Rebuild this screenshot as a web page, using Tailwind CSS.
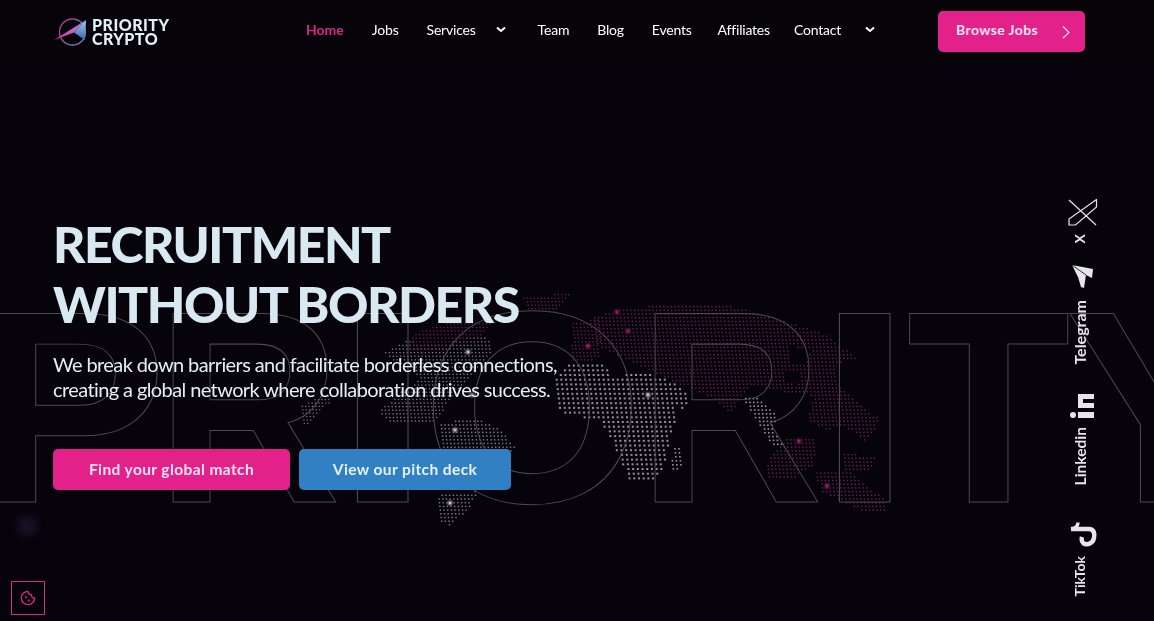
<!DOCTYPE html>
<html lang="en">

<head>
    <meta charset="UTF-8">
    <meta name="viewport" content="width=device-width, initial-scale=1.0">
    <script src="https://cdn.jsdelivr.net/npm/@tailwindcss/browser@4"></script>
    <title>Priority Crypto</title>
</head>

<body class="bg-[#06030b] h-[621px] overflow-hidden font-['Lato',sans-serif] text-[#e6f0f6]">
    <!-- Background map and outlined wordmark -->
    <div class="absolute inset-0 w-[1154px] h-[621px] overflow-hidden">
        <canvas id="worldMap" width="1154" height="621" class="absolute inset-0"></canvas>
        <svg class="absolute inset-0" width="1154" height="621" viewBox="0 0 1154 621" fill="none" stroke="#4b4a50" stroke-width="1">
            <g font-family="Liberation Sans" font-weight="700" font-size="274">
                <text transform="translate(-25 502) scale(1.05 1)" vector-effect="non-scaling-stroke">P</text>
                <text transform="translate(156 502) scale(0.935 1)" vector-effect="non-scaling-stroke">R</text>
                <text transform="translate(334 502) scale(1.28 1)" vector-effect="non-scaling-stroke">I</text>
                <text transform="translate(421.6 502) scale(1.04 1)" vector-effect="non-scaling-stroke">O</text>
                <text transform="translate(638 502) scale(0.935 1)" vector-effect="non-scaling-stroke">R</text>
                <text transform="translate(816 502) scale(1.28 1)" vector-effect="non-scaling-stroke">I</text>
                <text transform="translate(906.6 502) scale(0.98 1)" vector-effect="non-scaling-stroke">T</text>
                <text transform="translate(1065 502) scale(1.05 1)" vector-effect="non-scaling-stroke">Y</text>
            </g>
        </svg>
        <div class="absolute left-[17px] top-[516px] w-5 h-5 rounded-full bg-[#2a2347]/50 blur-[4px]"></div>
    </div>

    <!-- Header -->
    <header class="relative h-[63px] bg-[#060409] flex items-center pl-[53px] pr-[69px]">
        <div class="w-[253px] flex items-center">
            <svg class="-ml-[1px]" width="38" height="30" viewBox="0 0 38 30" fill="none">
                <defs>
                    <linearGradient id="ringStroke" x1="0" y1="0" x2="1" y2="1">
                        <stop offset="0" stop-color="#b0337f" />
                        <stop offset="1" stop-color="#5f8fc0" />
                    </linearGradient>
                    <linearGradient id="tailFill" x1="0" y1="1" x2="1" y2="0">
                        <stop offset="0" stop-color="#e0309a" />
                        <stop offset="1" stop-color="#a98fd8" />
                    </linearGradient>
                    <linearGradient id="wingFill" x1="0.5" y1="0" x2="0.5" y2="1">
                        <stop offset="0" stop-color="#8fd6f0" />
                        <stop offset="1" stop-color="#4a5fa8" />
                    </linearGradient>
                </defs>
                <circle cx="20.5" cy="15" r="13" stroke="url(#ringStroke)" stroke-width="1.3" />
                <path d="M2 23 L34 3 L22 15.5 Z" fill="url(#tailFill)" />
                <path d="M34 3 L33 23 L22 15.5 Z" fill="url(#wingFill)" />
            </svg>
            <div class="ml-[2px] font-black text-[16px] leading-[14px] tracking-[0.03em] text-[#e4eff6]">
                <div>PRIORITY</div>
                <div>CRYPTO</div>
            </div>
        </div>
        <nav class="-mt-[5px] flex items-center text-[14px] text-white gap-[28px] tracking-[-0.2px]">
            <a class="font-bold text-[#d6288a] tracking-normal">Home</a>
            <a>Jobs</a>
            <a class="flex items-center">Services
                <svg class="ml-[19px]" width="12" height="12" viewBox="0 0 12 12" fill="none" stroke="#fff" stroke-width="2"><path d="M2 4.5 L6 8 L10 4.5" /></svg>
            </a>
            <a class="ml-[3px]">Team</a>
            <a>Blog</a>
            <a>Events</a>
            <a class="-ml-[2px]">Affiliates</a>
            <a class="-ml-[4px] flex items-center">Contact
                <svg class="ml-[23px]" width="12" height="12" viewBox="0 0 12 12" fill="none" stroke="#fff" stroke-width="2"><path d="M2 4.5 L6 8 L10 4.5" /></svg>
            </a>
        </nav>
        <a class="ml-auto w-[147px] h-[41px] bg-[#e3218a] rounded-[5px] flex items-center justify-between pl-[18px] pr-[14px] text-[14px] font-bold tracking-[0.4px] text-[#fbe3f1]">
            <span class="-mt-[5px]">Browse Jobs</span>
            <svg width="10" height="14" viewBox="0 0 10 14" fill="none" stroke="#fbe3f1" stroke-width="1.2"><path d="M2 1.5 L8 7.5 L2 13" /></svg>
        </a>
    </header>

    <!-- Hero -->
    <main class="relative pl-[53px] pt-[151px]">
        <h1 class="font-black text-[50px] leading-[60px] tracking-[-0.03em] text-[#d9e9f2]">RECRUITMENT<br>WITHOUT BORDERS</h1>
        <p class="mt-[18px] text-[20px] leading-[25px] tracking-[-0.6px] text-[#e3eef5]">We break down barriers and facilitate borderless connections,<br>creating a global network where collaboration drives success.</p>
        <div class="mt-[47px] flex gap-[9px] text-[15.5px] font-bold tracking-[0.4px]">
            <a class="w-[237px] h-[41px] rounded-[5px] bg-[#e3218a] text-[#fbe3f1] flex items-center justify-center">Find your global match</a>
            <a class="w-[212px] h-[41px] rounded-[5px] bg-[#3180c4] text-[#e6f0f6] flex items-center justify-center">View our pitch deck</a>
        </div>
    </main>

    <!-- Social links -->
    <aside class="absolute left-[1068px] top-[199px] w-[30px] flex flex-col items-center text-[14px] font-bold text-[#e6e6ea]">
        <svg width="30" height="28" viewBox="0 0 30 28" fill="none" stroke="#e6e6ea" stroke-width="1.2">
            <path d="M28.5 0.5 V8 L7.5 26 H1 V20 Z" />
            <path d="M1 1 L28 26" />
        </svg>
        <span class="mt-[7px] mr-[6px] [writing-mode:vertical-rl] rotate-180 leading-[16px]">X</span>
        <svg class="mt-[21px]" width="30" height="25" viewBox="0 0 30 25" fill="#e6e6ea">
            <path d="M4 1 L25 5 L24 14 L18 11 L16 24 L13 23 L10 13 Z" />
            <path d="M4 1 L18 11" stroke="#05030a" stroke-width="0.8" />
        </svg>
        <span class="mt-[11px] mr-[6px] text-[16px] [writing-mode:vertical-rl] rotate-180 leading-[16px]">Telegram</span>
        <svg class="mt-[29px]" width="30" height="26" viewBox="0 0 30 26" fill="#e6e6ea">
            <path d="M10 0 H26 V5 H15 V9 H26 V14 H10 Z" />
            <rect x="10" y="18" width="16" height="6" />
            <circle cx="5" cy="21" r="3" />
        </svg>
        <span class="mt-[7px] mr-[6px] text-[15.5px] [writing-mode:vertical-rl] rotate-180 leading-[16px]">Linkedin</span>
        <svg class="mt-[36px]" width="30" height="27" viewBox="0 0 30 27" fill="none" stroke="#e6e6ea" stroke-width="4.5">
            <path d="M3 8 H21 C26 8 27 13 26 17 C25 22 20 24 17 23 C14 22 13 19 14 16" />
            <path d="M10 1.5 C10 5 7 7.5 3 8" stroke-width="3.5" />
        </svg>
        <span class="mt-[8px] mr-[6px] [writing-mode:vertical-rl] rotate-180 leading-[16px]">TikTok</span>
    </aside>

    <!-- Cookie settings -->
    <button class="absolute left-[11px] top-[581px] w-[34px] h-[34px] border border-[#d6288a] flex items-center justify-center">
        <svg width="16" height="16" viewBox="0 0 24 24" fill="none" stroke="#d6288a" stroke-width="2">
            <path d="M12 2 A10 10 0 1 0 22 12 A5 5 0 0 1 17 7 A5 5 0 0 1 12 2 Z" />
            <circle cx="9" cy="11" r="0.6" />
            <circle cx="13" cy="16" r="0.6" />
        </svg>
    </button>

    <script>
        // Dot clusters of the tilted world map: colour, spacing, dot size, outline
        const grey = "#939398";
        const dimGrey = "#828286";
        const pink = "#6c2257";
        const clusters = [
            { color: grey, step: 4.7, size: 2, poly: [[570,362],[600,362],[612,375],[645,372],[670,380],[688,395],[685,408],[672,405],[675,420],[668,440],[662,470],[650,482],[630,482],[618,455],[600,420],[560,412],[553,395],[555,375]] },
            { color: grey, step: 4, size: 1.6, poly: [[671,448],[681,448],[680,470],[672,470]] },
            { color: grey, step: 3.8, size: 1.6, poly: [[740,395],[755,396],[778,415],[772,425],[782,445],[772,445],[755,420]] },
            { color: dimGrey, step: 3.6, size: 1.3, poly: [[385,352],[405,340],[440,345],[468,336],[490,338],[492,352],[480,362],[470,378],[455,392],[433,423],[393,423],[378,412],[395,395],[420,378],[408,365],[395,362]] },
            { color: dimGrey, step: 3.4, size: 1.2, poly: [[300,405],[325,392],[332,400],[318,412],[302,428]] },
            { color: dimGrey, step: 3.7, size: 1.4, poly: [[440,422],[480,418],[500,430],[516,448],[500,455],[470,490],[440,490]] },
            { color: dimGrey, step: 3.7, size: 1.4, poly: [[438,495],[478,490],[468,510],[448,525],[438,520]] },
            { color: pink, step: 3.6, size: 1.3, poly: [[413,332],[450,322],[493,322],[480,338],[430,350],[405,350]] },
            { color: pink, step: 3.5, size: 1.3, poly: [[523,297],[570,292],[555,310],[525,310]] },
            { color: pink, step: 3.6, size: 1.3, poly: [[570,322],[600,318],[600,358],[572,362]] },
            { color: pink, step: 3.7, size: 1.4, poly: [[592,316],[620,308],[680,303],[722,303],[775,318],[822,332],[860,360],[835,362],[838,385],[880,420],[865,440],[842,425],[826,430],[808,420],[812,395],[790,392],[750,385],[730,412],[712,398],[687,387],[627,360],[595,345]], holes: [[[790,345],[810,350],[805,362],[790,362]], [[785,372],[800,372],[798,385],[785,382]]] },
            { color: pink, step: 3.7, size: 1.4, poly: [[787,437],[813,437],[815,465],[793,477],[767,477],[767,457]] },
            { color: pink, step: 3.7, size: 1.4, poly: [[840,453],[877,455],[870,470],[842,470]] },
            { color: pink, step: 3.7, size: 1.4, poly: [[813,470],[850,472],[885,500],[888,513],[860,510],[820,490]] }
        ];
        const sparks = [
            [468,352,"#ffffff"],[472,395,"#d0d0d0"],[455,430,"#ffffff"],[450,503,"#ffffff"],[648,395,"#ffffff"],
            [588,346,"#e0289a"],[617,312,"#c0288a"],[628,331,"#c0288a"],[799,441,"#d0288a"],[827,486,"#d0288a"]
        ];

        function inside(x, y, poly) {
            let hit = false;
            for (let i = 0, j = poly.length - 1; i < poly.length; j = i++) {
                const [xi, yi] = poly[i], [xj, yj] = poly[j];
                if ((yi > y) !== (yj > y) && x < ((xj - xi) * (y - yi)) / (yj - yi) + xi) hit = !hit;
            }
            return hit;
        }

        const ctx = document.getElementById("worldMap").getContext("2d");
        clusters.forEach((c) => {
            ctx.fillStyle = c.color;
            for (let y = 280; y < 530; y += c.step) {
                for (let x = 290; x < 900; x += c.step) {
                    const px = x + ((y - 280) * 0.12) % c.step;
                    if (!inside(px, y, c.poly)) continue;
                    if ((c.holes || []).some((h) => inside(px, y, h))) continue;
                    ctx.fillRect(px, y, c.size, c.size);
                }
            }
        });
        sparks.forEach(([x, y, color]) => {
            const glow = ctx.createRadialGradient(x, y, 0, x, y, 5);
            glow.addColorStop(0, color);
            glow.addColorStop(1, "transparent");
            ctx.fillStyle = glow;
            ctx.fillRect(x - 5, y - 5, 10, 10);
        });
    </script>
</body>

</html>
